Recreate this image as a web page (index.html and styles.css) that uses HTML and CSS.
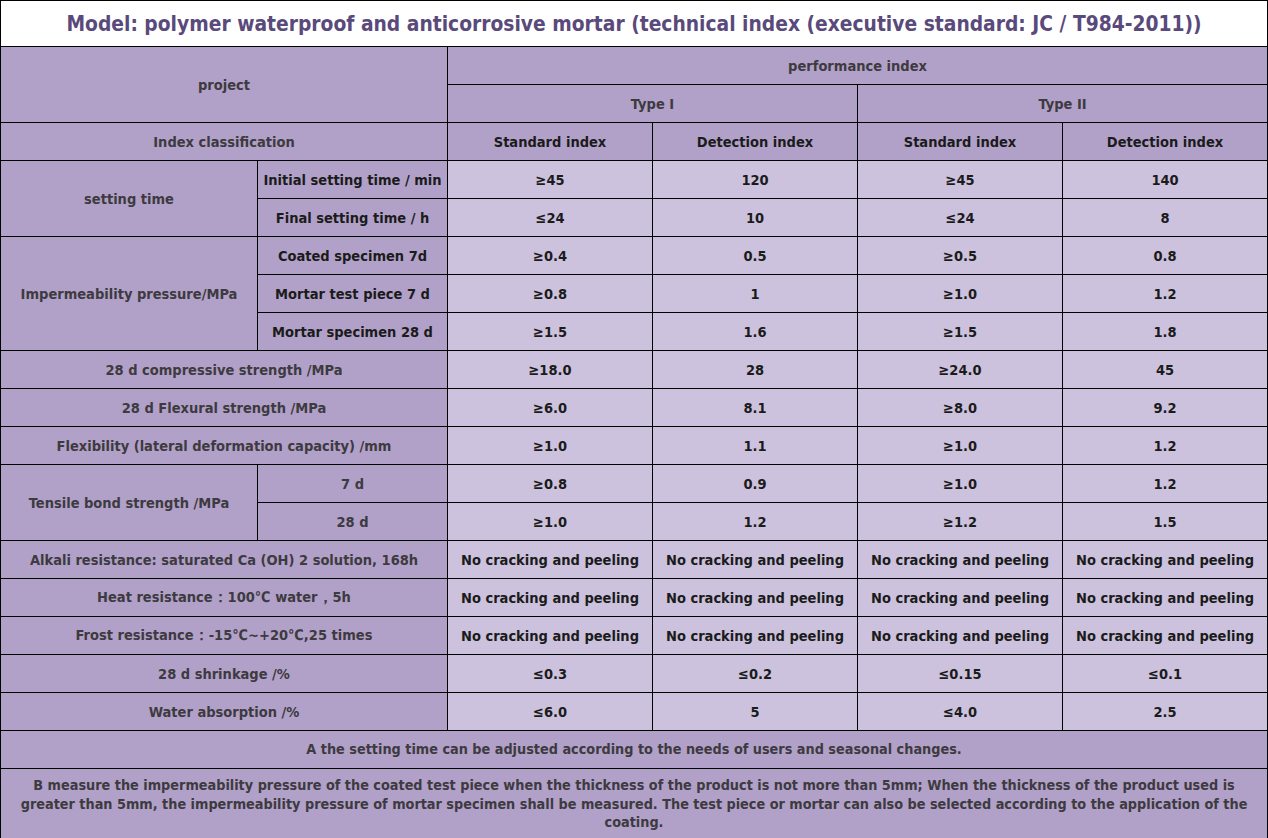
FILE: index.html
```html
<!DOCTYPE html>
<html>
<head>
<meta charset="utf-8">
<link rel="stylesheet" href="styles.css">
</head>
<body>
<table class="spec">
  <colgroup>
    <col class="c1"><col class="c2"><col class="c3"><col class="c4"><col class="c5"><col class="c6">
  </colgroup>
  <tr class="title-row"><td colspan="6" class="title">Model: polymer waterproof and anticorrosive mortar (technical index (executive standard: JC / T984-2011))</td></tr>
  <tr><td colspan="2" rowspan="2" class="hd gray">project</td><td colspan="4" class="hd gray">performance index</td></tr>
  <tr><td colspan="2" class="hd gray">Type I</td><td colspan="2" class="hd gray">Type II</td></tr>
  <tr><td colspan="2" class="hd gray">Index classification</td><td class="hd">Standard index</td><td class="hd">Detection index</td><td class="hd">Standard index</td><td class="hd">Detection index</td></tr>

  <tr><td rowspan="2" class="hd gray">setting time</td><td class="hd">Initial setting time / min</td><td>≥45</td><td>120</td><td>≥45</td><td>140</td></tr>
  <tr><td class="hd">Final setting time / h</td><td>≤24</td><td>10</td><td>≤24</td><td>8</td></tr>

  <tr><td rowspan="3" class="hd gray">Impermeability pressure/MPa</td><td class="hd">Coated specimen 7d</td><td>≥0.4</td><td>0.5</td><td>≥0.5</td><td>0.8</td></tr>
  <tr><td class="hd">Mortar test piece 7 d</td><td>≥0.8</td><td>1</td><td>≥1.0</td><td>1.2</td></tr>
  <tr><td class="hd">Mortar specimen 28 d</td><td>≥1.5</td><td>1.6</td><td>≥1.5</td><td>1.8</td></tr>

  <tr><td colspan="2" class="hd gray">28 d compressive strength /MPa</td><td>≥18.0</td><td>28</td><td>≥24.0</td><td>45</td></tr>
  <tr><td colspan="2" class="hd gray">28 d Flexural strength /MPa</td><td>≥6.0</td><td>8.1</td><td>≥8.0</td><td>9.2</td></tr>
  <tr><td colspan="2" class="hd gray">Flexibility (lateral deformation capacity) /mm</td><td>≥1.0</td><td>1.1</td><td>≥1.0</td><td>1.2</td></tr>

  <tr><td rowspan="2" class="hd gray">Tensile bond strength /MPa</td><td class="hd gray">7 d</td><td>≥0.8</td><td>0.9</td><td>≥1.0</td><td>1.2</td></tr>
  <tr><td class="hd gray">28 d</td><td>≥1.0</td><td>1.2</td><td>≥1.2</td><td>1.5</td></tr>

  <tr><td colspan="2" class="hd gray">Alkali resistance: saturated Ca (OH) 2 solution, 168h</td><td>No cracking and peeling</td><td>No cracking and peeling</td><td>No cracking and peeling</td><td>No cracking and peeling</td></tr>
  <tr><td colspan="2" class="hd gray">Heat resistance：100℃ water，5h</td><td>No cracking and peeling</td><td>No cracking and peeling</td><td>No cracking and peeling</td><td>No cracking and peeling</td></tr>
  <tr><td colspan="2" class="hd gray">Frost resistance：-15℃~+20℃,25 times</td><td>No cracking and peeling</td><td>No cracking and peeling</td><td>No cracking and peeling</td><td>No cracking and peeling</td></tr>
  <tr><td colspan="2" class="hd gray">28 d shrinkage /%</td><td>≤0.3</td><td>≤0.2</td><td>≤0.15</td><td>≤0.1</td></tr>
  <tr><td colspan="2" class="hd gray">Water absorption /%</td><td>≤6.0</td><td>5</td><td>≤4.0</td><td>2.5</td></tr>

  <tr class="note-a"><td colspan="6" class="hd note">A the setting time can be adjusted according to the needs of users and seasonal changes.</td></tr>
  <tr class="note-b"><td colspan="6" class="hd note">B measure the impermeability pressure of the coated test piece when the thickness of the product is not more than 5mm; When the thickness of the product used is greater than 5mm, the impermeability pressure of mortar specimen shall be measured. The test piece or mortar can also be selected according to the application of the coating.</td></tr>
</table>
</body>
</html>
```

FILE: styles.css
```css
html, body {
  margin: 0;
  padding: 0;
  background: #ffffff;
}

.spec {
  border-collapse: collapse;
  table-layout: fixed;
  width: 1267px;
  font-family: "DejaVu Sans Condensed", "DejaVu Sans", sans-serif;
  font-weight: bold;
  font-size: 14.5px;
  color: #1b1b1b;
}

.c1 { width: 257px; }
.c2 { width: 190px; }
.c3 { width: 205px; }
.c4 { width: 205px; }
.c5 { width: 205px; }
.c6 { width: 205px; }

.spec td {
  border: 1px solid #000;
  height: 37px;
  padding: 0 2px;
  text-align: center;
  vertical-align: middle;
  background: #ccc2de;
  white-space: nowrap;
}

.spec td.hd {
  background: #b1a1c8;
}

.spec td.gray {
  color: #3d3a40;
}

.spec .title-row td.title {
  background: #ffffff;
  height: 45px;
  font-size: 20.8px;
  color: #5a4a7c;
}

.spec td.note {
  color: #3d3a40;
  white-space: normal;
  font-family: "DejaVu Sans Condensed", "DejaVu Sans", sans-serif;
  font-size: 14.3px;
  line-height: 18.5px;
  padding: 0 8px;
}

.note-b td.note {
  height: 68px;
  padding-top: 1px;
}
```
